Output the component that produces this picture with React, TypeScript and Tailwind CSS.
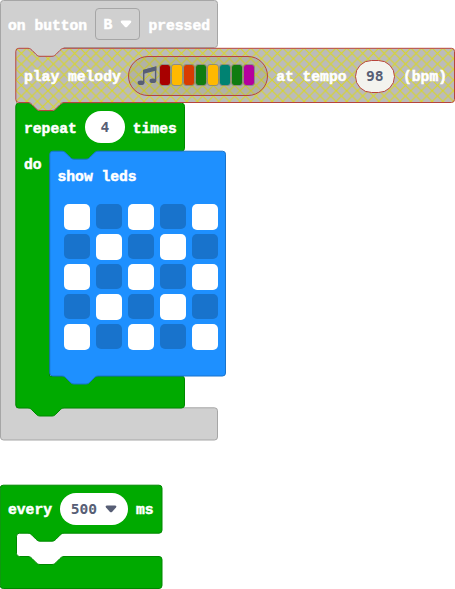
import type { ReactNode } from "react";

const NOTCH = "c2 0 3 1 4 2l4 4c1 1 2 2 4 2h12c2 0 3 -1 4 -2l4 -4c1 -1 2 -2 4 -2";
const NOTCH_BACK = "c-2 0 -3 1 -4 2l-4 4c-1 1 -2 2 -4 2h-12c-2 0 -3 -1 -4 -2l-4 -4c-1 -1 -2 -2 -4 -2";

function Shape({ d, fill, stroke, children }: { d: string; fill: string; stroke: string; children?: ReactNode }) {
  return (
    <svg className="absolute inset-0 h-full w-full overflow-visible" aria-hidden="true">
      {children}
      <path d={d} fill={fill} stroke={stroke} strokeWidth="1" />
    </svg>
  );
}

function Caret({ color }: { color: string }) {
  return (
    <svg width="12" height="8" viewBox="0 0 12 8" aria-hidden="true">
      <path d="M1.7 .5H10.3Q12 1 11 2.5L7 6.9Q6 7.8 5 6.9L1 2.5Q0 1 1.7 .5Z" fill={color} />
    </svg>
  );
}

function Row({ children, className }: { children: ReactNode; className: string }) {
  return <div className={`relative flex items-center gap-2 px-2 ${className}`}>{children}</div>;
}

function Label({ children }: { children: ReactNode }) {
  return <span className="pt-[2px]">{children}</span>;
}

function Value({ children }: { children: ReactNode }) {
  return <span className="font-['DejaVu_Sans_Mono',monospace] text-[14.62px] [-webkit-text-stroke:0]">{children}</span>;
}

const notes = ["bg-[#a80000]", "bg-[#ffb900]", "bg-[#d83b01]", "bg-[#107c10]", "bg-[#ffb900]", "bg-[#008272]", "bg-[#107c10]", "bg-[#b4009e]"];

export default function App() {
  return (
    <div className="relative h-[589px] w-[455px] overflow-hidden bg-white font-['Liberation_Mono',monospace] text-[14.67px] leading-4 font-bold whitespace-pre text-white [-webkit-text-stroke:0.5px_currentColor]">
      <section className="absolute top-0 left-0 h-[440px] w-[218px]">
        <Shape
          fill="#d0d0d0"
          stroke="#a6a6a6"
          d="M.5 3.5a3 3 0 0 1 3 -3H214.5a3 3 0 0 1 3 3V44.5a3 3 0 0 1 -3 3H64V60H16.5V407.8H214.5a3 3 0 0 1 3 3V437a3 3 0 0 1 -3 3H3.5a3 3 0 0 1 -3 -3Z"
        />
        <Row className="h-[49px]">
          <Label>on button</Label>
          <span className="mb-px flex h-8 w-[46px] items-center justify-center gap-2 rounded-[4px] border border-[#a6a6a6]">
            <Label>B</Label>
            <Caret color="#fff" />
          </span>
          <Label>pressed</Label>
        </Row>
      </section>

      <section className="absolute top-[103px] left-[15px] h-[305px] w-[170px]">
        <Shape
          fill="#00aa00"
          stroke="#008800"
          d={`M.8 3.2a3 3 0 0 1 3 -3H13${NOTCH}H166.5a3 3 0 0 1 3 3V45.2a3 3 0 0 1 -3 3H84V60H34.5V273H166.5a3 3 0 0 1 3 3V302a3 3 0 0 1 -3 3H49${NOTCH_BACK}H3.8a3 3 0 0 1 -3 -3Z`}
        />
        <Row className="h-[49px] pl-[9px]">
          <Label>repeat</Label>
          <span className="mb-px flex h-8 w-10 items-center justify-center rounded-full bg-white text-[#575e75]">
            <Value>4</Value>
          </span>
          <Label>times</Label>
        </Row>
        <div className="relative mt-[5px] pl-[9px]">do</div>
      </section>

      <section className="absolute top-12 left-[15px] h-[55px] w-[440px]">
        <Shape
          fill="url(#disabled)"
          stroke="#b8443c"
          d={`M.8 3.3a3 3 0 0 1 3 -3H13${NOTCH}H436.5a3 3 0 0 1 3 3V51.5a3 3 0 0 1 -3 3H49${NOTCH_BACK}H3.8a3 3 0 0 1 -3 -3Z`}
        >
          <defs>
            <pattern id="disabled" patternUnits="userSpaceOnUse" width="10.67" height="10.67" x="1" y="0">
              <rect width="10.67" height="10.67" fill="#bbb" />
              <path d="M-1 -1L11.67 11.67M11.67 -1L-1 11.67" stroke="#d8d626" strokeWidth="1.1" />
            </pattern>
          </defs>
        </Shape>
        <Row className="h-[56px] pl-[9px]">
          <Label>play melody</Label>
          <span className="-mr-px -ml-px flex h-10 w-[142px] items-center rounded-full border border-[#b8443c] bg-[#777733]/15 pl-2">
            <svg width="20" height="20" viewBox="0 0 20 20" className="mb-px" aria-hidden="true">
              <path d="M6.7 16.7V4.5L18.6 1.5V14.5" fill="none" stroke="#575e75" strokeWidth="1.4" />
              <path d="M6 3.9L19.3 .3V4.6L6 8Z" fill="#575e75" />
              <ellipse cx="4" cy="16.8" rx="3.4" ry="2.3" fill="#575e75" />
              <ellipse cx="15.9" cy="14.7" rx="3.4" ry="2.3" fill="#575e75" />
            </svg>
            <span className="mb-[2px] ml-[3.5px] flex gap-[2px]">
              {notes.map((color, i) => (
                <span key={i} className={`h-5 w-[10px] rounded-[2px] outline outline-[#77776a]/60 ${color}`} />
              ))}
            </span>
          </span>
          <span className="ml-px pt-[2px]">at tempo</span>
          <span className="flex h-[33px] w-[41px] items-center justify-center rounded-full border border-[#b8443c] bg-[#f3f3ee] text-[#575e75]">
            <Value>98</Value>
          </span>
          <Label>(bpm)</Label>
        </Row>
      </section>

      <section className="absolute top-[151px] left-[49px] h-[226px] w-[177px]">
        <Shape
          fill="#1e90ff"
          stroke="#1873cc"
          d={`M.8 3.2a3 3 0 0 1 3 -3H13${NOTCH}H173.5a3 3 0 0 1 3 3V222a3 3 0 0 1 -3 3H49${NOTCH_BACK}H3.8a3 3 0 0 1 -3 -3Z`}
        />
        <div className="relative pt-[18px] pl-[8.5px]">show leds</div>
        <div className="relative mt-[18.5px] ml-[15px] grid w-[154px] grid-cols-5 gap-x-[6px] gap-y-1">
          {Array.from({ length: 25 }, (_, i) => (
            <span key={i} className={i % 2 === 0 ? "h-[26px] w-[26px] rounded-[5px] bg-white" : "mt-[.5px] h-[25px] w-[25.5px] rounded-[5px] bg-[#1873cc]"} />
          ))}
        </div>
      </section>

      <section className="absolute top-[485px] left-0 h-[104px] w-[163px]">
        <Shape
          fill="#00aa00"
          stroke="#008800"
          d={`M.2 3.2a3 3 0 0 1 3 -3H159a3 3 0 0 1 3 3V45.2a3 3 0 0 1 -3 3H64${NOTCH_BACK}H19.5a3 3 0 0 0 -3 3V68.5a3 3 0 0 0 3 3H28${NOTCH}H159a3 3 0 0 1 3 3V100.5a3 3 0 0 1 -3 3H3.2a3 3 0 0 1 -3 -3Z`}
        />
        <Row className="h-12">
          <Label>every</Label>
          <span className="flex h-8 w-[68px] items-center justify-center gap-2 rounded-full bg-white text-[#575e75]">
            <Value>500</Value>
            <Caret color="#575e75" />
          </span>
          <Label>ms</Label>
        </Row>
      </section>
    </div>
  );
}
